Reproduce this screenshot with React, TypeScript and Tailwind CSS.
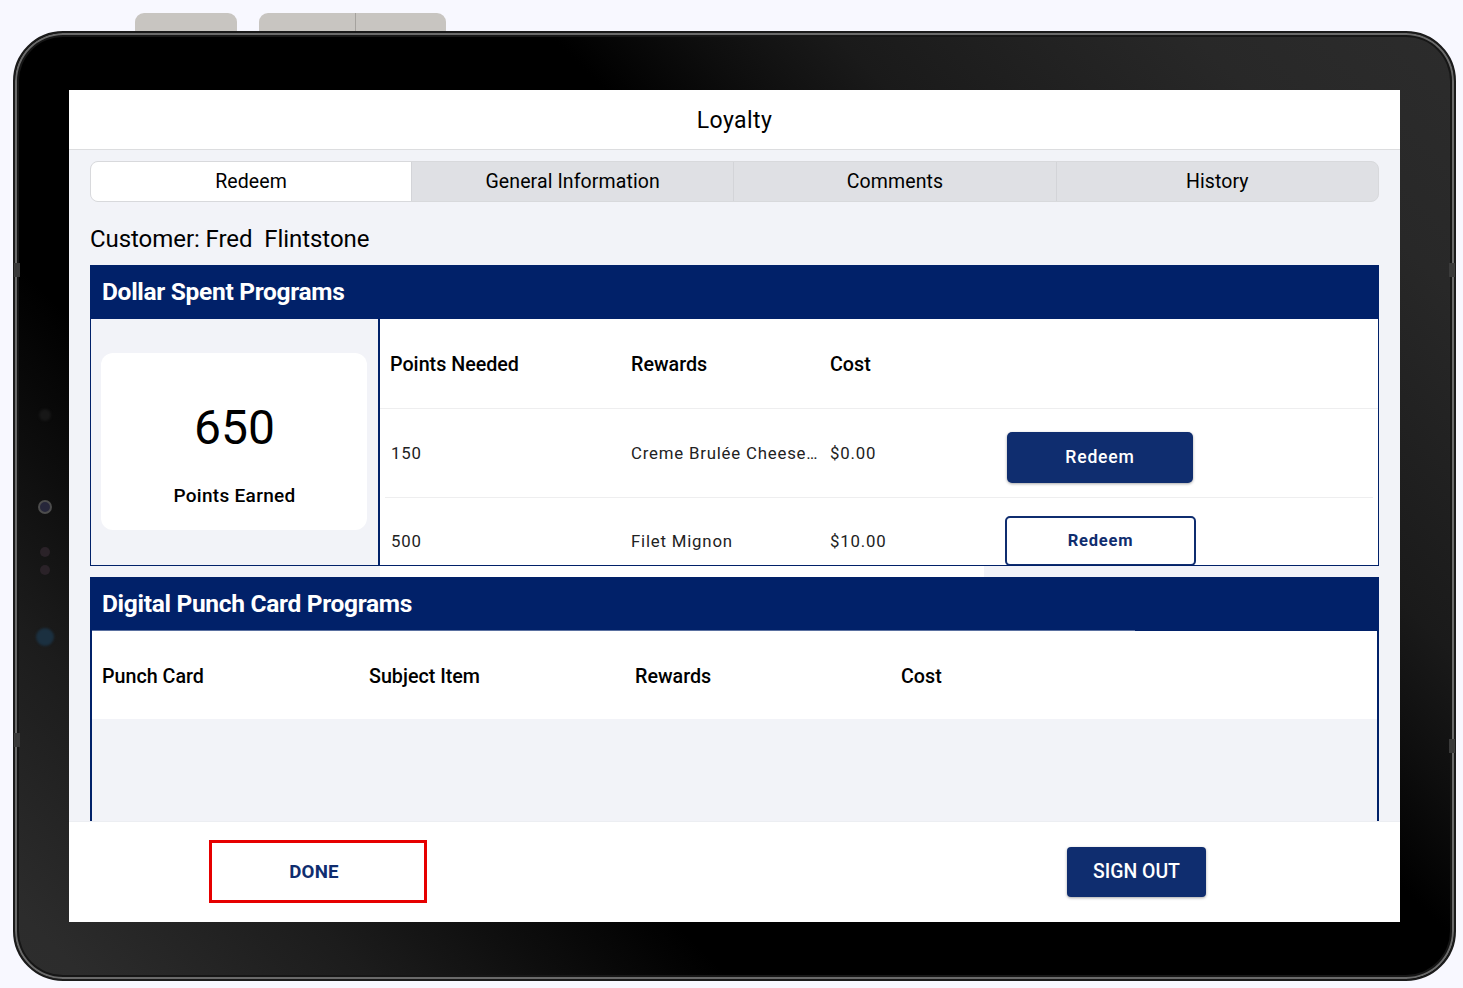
import React from 'react';

const tabs = ['Redeem', 'General Information', 'Comments', 'History'];

const Loyalty: React.FC = () => {
  return (
    <div className="w-[1331px] h-[832px] flex flex-col bg-[#f2f3f8] font-['Roboto',sans-serif] text-black">
      {/* title */}
      <div className="h-[60px] shrink-0 flex items-center justify-center pt-[4px] bg-white border-b border-[#dcdddf] text-[23px] tracking-[0.4px]">
        Loyalty
      </div>

      <div className="flex-1 min-h-0 overflow-hidden px-[21px] pt-[11px]">
        {/* tabs */}
        <div className="flex h-[41px] rounded-[8px] border border-[#d8d9dc] bg-[#dfe0e4] overflow-hidden">
          {tabs.map((t, i) => (
            <div
              key={t}
              className={
                i === 0
                  ? 'w-[320px] flex items-center justify-center bg-white text-[19.5px] tracking-[0.1px]'
                  : 'flex-1 flex items-center justify-center border-l border-[#d3d4d8] text-[19.5px] tracking-[0.1px]'
              }
            >
              {t}
            </div>
          ))}
        </div>

        <div className="mt-[19px] h-[36px] flex items-center text-[24px] tracking-[-0.06px] whitespace-pre">Customer: Fred  Flintstone</div>

        {/* dollar spent */}
        <section className="mt-[8px] h-[301px] border border-[#012169] overflow-hidden flex flex-col">
          <div className="h-[53px] shrink-0 bg-[#012169] text-white flex items-center pl-[11px] pb-[1px] text-[24.5px] font-bold tracking-[-0.3px]">
            Dollar Spent Programs
          </div>
          <div className="flex flex-1 min-h-0">
            <div className="w-[289px] shrink-0 border-r-2 border-[#012169] pl-[10px] pr-[11px] pt-[34px]">
              <div className="h-[177px] rounded-[12px] bg-white flex flex-col items-center">
                <div className="mt-[43px] ml-[1px] text-[48px] leading-[64px]">650</div>
                <div className="mt-[22px] ml-[1px] text-[19px] leading-[28px] font-medium tracking-[0.3px]">Points Earned</div>
              </div>
            </div>
            <div className="flex-1 min-w-0 bg-white">
              <div className="h-[90px] flex items-center pl-[10px] pt-[2px] border-b border-[#eeeeef] text-[19.7px] font-medium">
                <div className="w-[241px]">Points Needed</div>
                <div className="w-[199px]">Rewards</div>
                <div>Cost</div>
              </div>
              <div className="mx-[5px] h-[89px] flex items-center pl-[6px] pt-[2px] border-b border-[#eeeeef] text-[16.8px] tracking-[0.8px] text-[#222]">
                <div className="w-[240px]">150</div>
                <div className="w-[199px] whitespace-nowrap">Creme Brulée Cheese…</div>
                <div className="w-[177px]">$0.00</div>
                <button className="w-[186px] h-[51px] mt-[6px] rounded-[5px] bg-[#0f2d6f] text-white text-[17.6px] font-medium shadow-[0_1px_3px_rgba(0,0,0,0.35)]">Redeem</button>
              </div>
              <div className="mx-[5px] h-[70px] flex items-start pl-[6px] text-[16.8px] tracking-[0.8px] text-[#222]">
                <div className="w-[240px] mt-[31px]">500</div>
                <div className="w-[199px] mt-[31px]">Filet Mignon</div>
                <div className="w-[175px] mt-[31px]">$10.00</div>
                <button className="w-[191px] h-[50px] mt-[18px] rounded-[5px] border-2 border-[#0f2d6f] bg-white text-[#0f2d6f] text-[16.5px] font-bold">Redeem</button>
              </div>
            </div>
          </div>
        </section>

        <div className="h-[11px] ml-[290px] w-[604px] bg-white" />

        {/* punch card */}
        <section className="h-[260px] border-x-2 border-t border-[#012169]">
          <div className="h-[52px] bg-[#012169] text-white flex items-center pl-[10px] text-[24.5px] font-bold tracking-[-0.3px]">
            Digital Punch Card Programs
          </div>
          <div className="h-px flex bg-[#012169]">
            <div className="w-[1043px] bg-[#5a70a0]" />
          </div>
          <div className="h-[88px] bg-white flex items-center pl-[10px] pt-[3px] text-[19.7px] font-medium">
            <div className="w-[267px]">Punch Card</div>
            <div className="w-[266px]">Subject Item</div>
            <div className="w-[266px]">Rewards</div>
            <div>Cost</div>
          </div>
        </section>
      </div>

      {/* footer */}
      <div className="h-[101px] shrink-0 bg-white border-t border-[#eceef2] flex items-start">
        <button className="ml-[140px] mt-[18px] w-[218px] h-[63px] border-[3px] border-[#e60000] pr-[8px] pt-[2px] text-[#0f2d6f] text-[18.7px] font-bold tracking-[0.2px]">DONE</button>
        <button className="ml-[640px] mt-[25px] w-[139px] h-[50px] rounded-[4px] bg-[#0f2d6f] text-white text-[19.4px] font-medium shadow-[0_1px_3px_rgba(0,0,0,0.35)]">SIGN OUT</button>
      </div>
    </div>
  );
};

const App: React.FC = () => {
  return (
    <div className="w-[1463px] h-[988px] bg-[#f8f8ff] overflow-hidden pt-[13px] pl-[13px]">
      {/* hardware buttons on the top edge */}
      <div className="h-[18px] flex items-start ml-[122px]">
        <div className="w-[102px] h-[18px] rounded-t-[9px] bg-[#c8c5c1]" />
        <div className="ml-[22px] w-[187px] h-[18px] rounded-t-[9px] bg-[#c8c5c1] flex">
          <div className="ml-[96px] w-px bg-[#a5a29e]" />
        </div>
      </div>

      {/* tablet */}
      <div className="relative w-[1443px] h-[950px] rounded-[50px] border-[2px] border-[#1a1a1a] bg-[linear-gradient(45deg,#2d2d2d_0%,#2c2c2c_3%,#1c1c1c_15%,#000_30%,#000_62%,#0e0e0e_68%,#1a1a1a_74%,#282828_89%,#2c2c2c_100%)] shadow-[inset_0_0_0_2px_#6a6a6a,inset_0_0_0_4px_#161616] pt-[57px] pl-[54px]">
        <Loyalty />

        {/* sensors on the bezel */}
        <div className="absolute left-[24px] top-[376px] w-[12px] h-[12px] rounded-full bg-[#171717] blur-[1px]" />
        <div className="absolute left-[23px] top-[467px] w-[14px] h-[14px] rounded-full bg-[#26263a] border-[2px] border-[#4c4c4c] blur-[0.5px]" />
        <div className="absolute left-[25px] top-[514px] w-[10px] h-[10px] rounded-full bg-[#2a2228] blur-[0.5px]" />
        <div className="absolute left-[25px] top-[532px] w-[10px] h-[10px] rounded-full bg-[#2a2228] blur-[0.5px]" />
        <div className="absolute left-[21px] top-[595px] w-[18px] h-[18px] rounded-full bg-[#1b3040] blur-[1px]" />

        {/* antenna notches on the frame */}
        <div className="absolute -left-[1px] top-[230px] w-[6px] h-[14px] bg-[#3a3a3a]" />
        <div className="absolute -left-[1px] top-[700px] w-[6px] h-[14px] bg-[#3a3a3a]" />
        <div className="absolute -right-[1px] top-[230px] w-[6px] h-[14px] bg-[#3a3a3a]" />
        <div className="absolute -right-[1px] top-[706px] w-[6px] h-[14px] bg-[#3a3a3a]" />
      </div>
    </div>
  );
};

export default App;
